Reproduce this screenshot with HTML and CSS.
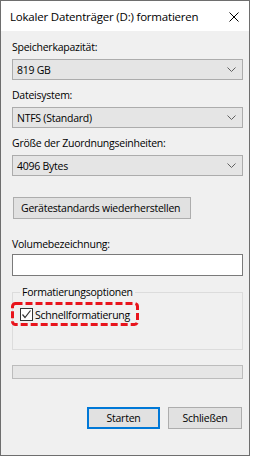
FILE: index.html
```html
<!DOCTYPE html>
<html lang="de">
<head>
  <meta charset="UTF-8" />
  <title>Lokaler Datenträger (D:) formatieren</title>
  <link rel="stylesheet" href="styles.css">
</head>
<body>
  <div class="window">
    <div class="titlebar">
      <span class="title">Lokaler Datenträger (D:) formatieren</span>
      <svg class="close" width="10" height="10" viewBox="0 0 10 10">
        <path d="M0.5 0.5 L9.5 9.5 M9.5 0.5 L0.5 9.5" stroke="#000" stroke-width="1" fill="none"/>
      </svg>
    </div>

    <div class="content">
      <label class="field-label first">Speicherkapazität:</label>
      <div class="select"><span>819 GB</span><svg class="chev" width="9" height="5" viewBox="0 0 9 5"><path d="M0.5 0.5 L4.5 4.5 L8.5 0.5" stroke="#606060" fill="none"/></svg></div>

      <label class="field-label">Dateisystem:</label>
      <div class="select"><span>NTFS (Standard)</span><svg class="chev" width="9" height="5" viewBox="0 0 9 5"><path d="M0.5 0.5 L4.5 4.5 L8.5 0.5" stroke="#606060" fill="none"/></svg></div>

      <label class="field-label">Größe der Zuordnungseinheiten:</label>
      <div class="select"><span>4096 Bytes</span><svg class="chev" width="9" height="5" viewBox="0 0 9 5"><path d="M0.5 0.5 L4.5 4.5 L8.5 0.5" stroke="#606060" fill="none"/></svg></div>

      <button class="btn restore">Gerätestandards wiederherstellen</button>

      <label class="field-label volume">Volumebezeichnung:</label>
      <div class="textbox"></div>

      <fieldset class="group">
        <legend>Formatierungsoptionen</legend>
        <div class="option">
          <span class="checkbox">
            <svg width="11" height="11" viewBox="0 0 11 11"><path d="M1.5 5.5 L4 8.5 L9.5 1.5" stroke="#333" stroke-width="1.2" fill="none"/></svg>
          </span>
          <span>Schnellformatierung</span>
          <svg class="highlight" width="128" height="24" viewBox="0 0 128 24">
            <rect x="1.5" y="1.5" width="125" height="21" rx="3" ry="3" fill="none" stroke="#e8141c" stroke-width="3" stroke-dasharray="7 3"/>
          </svg>
        </div>
      </fieldset>

      <div class="progress"></div>

      <div class="actions">
        <button class="btn primary">Starten</button>
        <button class="btn">Schließen</button>
      </div>
    </div>
  </div>
</body>
</html>
```

FILE: styles.css
```css
/* Base */
* { margin: 0; padding: 0; box-sizing: border-box; }
body {
  background: #fff;
  font-family: "Open Sans", "Noto Sans", sans-serif;
  font-size: 10.5px;
  letter-spacing: -0.25px;
  color: #000;
}

/* Dialog window */
.window {
  width: 250px;
  height: 456px;
  border: 1px solid #6e6e6e;
  background: #f0f0f0;
  display: flex;
  flex-direction: column;
}

.titlebar {
  height: 30px;
  background: #fff;
  display: flex;
  align-items: center;
  justify-content: space-between;
  padding: 0 10px 0 9px;
}
.title { line-height: 15px; font-size: 11.5px; letter-spacing: -0.2px; }
.close { margin-top: 1px; }

/* Form content */
.content {
  padding: 0 6px 0 11px;
  display: flex;
  flex-direction: column;
}

.field-label { display: block; line-height: 15px; margin-top: 8px; margin-bottom: 4px; }
.field-label.first { margin-top: 9px; }
.field-label.volume { margin-top: 18px; margin-bottom: 2px; }

.select {
  height: 21px;
  background: #e5e5e5;
  border: 1px solid #acacac;
  display: flex;
  align-items: center;
  justify-content: space-between;
  padding: 0 6px 0 4px;
}

.btn {
  font-family: inherit;
  font-size: 10.5px;
  letter-spacing: -0.25px;
  height: 22px;
  background: #e1e1e1;
  border: 1px solid #adadad;
  color: #000;
  white-space: nowrap;
}
.btn.restore { margin-top: 21px; width: 178px; margin-left: 1px; text-align: left; padding-left: 7px; }

.textbox { height: 22px; background: #fff; border: 1px solid #7a7a7a; }

/* Group box */
.group {
  margin-top: 9px;
  height: 65px;
  border: 1px solid #dcdcdc;
  padding: 0;
}
.group legend { margin-left: 7px; padding: 0 2px; line-height: 15px; }

.option {
  position: relative;
  display: flex;
  align-items: center;
  margin-top: 7px;
  margin-left: 7px;
  height: 15px;
  gap: 2px;
}
.checkbox {
  width: 13px;
  height: 13px;
  border: 1px solid #333;
  background: #fff;
  display: flex;
  align-items: center;
  justify-content: center;
}
.highlight { position: absolute; left: -9px; top: -5px; }

.progress {
  margin-top: 15px;
  height: 14px;
  background: #e6e6e6;
  border: 1px solid #bcbcbc;
}

/* Bottom buttons */
.actions {
  display: flex;
  justify-content: flex-end;
  gap: 8px;
  margin-top: 28px;
  padding-right: 1px;
}
.actions .btn { width: 74px; }
.btn.primary { border: 2px solid #0078d7; width: 73px; }
```
